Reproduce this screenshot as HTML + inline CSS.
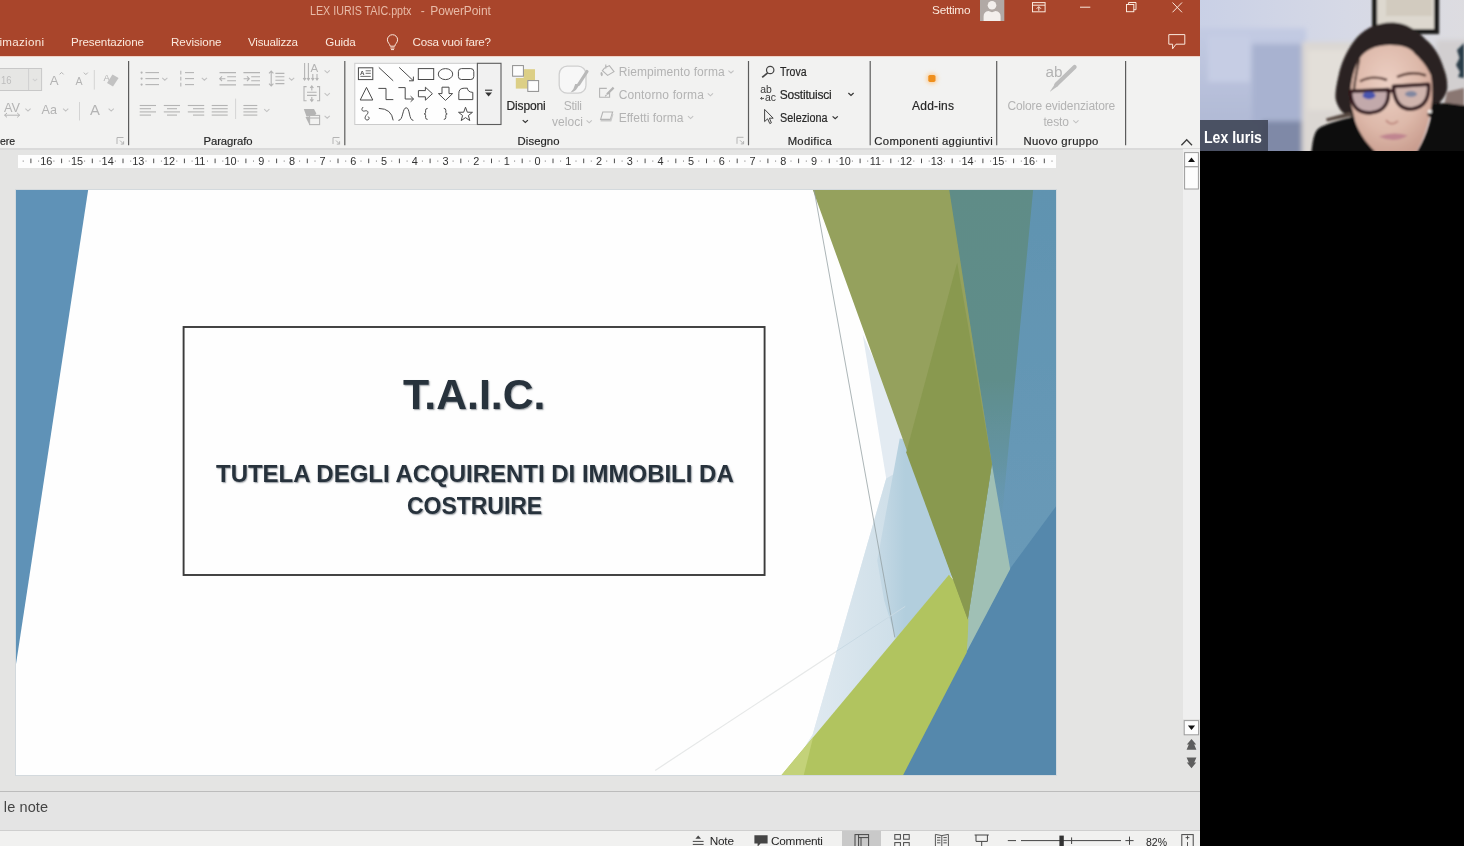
<!DOCTYPE html>
<html><head><meta charset="utf-8"><title>PowerPoint</title>
<style>
*{margin:0;padding:0;box-sizing:border-box}
html,body{width:1464px;height:846px;overflow:hidden;background:#000;font-family:"Liberation Sans",sans-serif}
#app{position:absolute;left:0;top:0;width:1200px;height:846px;background:#e4e4e3;overflow:hidden;opacity:.9999}
#title{position:absolute;left:0;top:0;width:1200px;height:57px;background:#a9452b}
#ribbon{position:absolute;left:0;top:56px;width:1200px;height:93.6px;background:#f2f2f1;border-top:1px solid #efd3c8;border-bottom:2px solid #dadada}
.t{position:absolute;white-space:pre;line-height:1;-webkit-font-smoothing:antialiased}
#ruler{position:absolute;left:18px;top:155px;width:1038px;height:13px;background:#fdfdfd}
#slide{position:absolute;left:15.8px;top:189.6px;width:1040.4px;height:585.4px;background:#fefefe;overflow:hidden;box-shadow:0 0 0 1px #d3d9dd}
#notes{position:absolute;left:0;top:791px;width:1200px;height:39px;background:#e4e4e4;border-top:1px solid #bcbcbc}
#status{position:absolute;left:0;top:830px;width:1200px;height:16px;background:#f1f1f0;border-top:1px solid #cfcfcf}
#vs{position:absolute;left:1183px;top:149px;width:17px;height:570px;background:#efefef}
#cam{position:absolute;left:1200px;top:0;width:264px;height:151px;overflow:hidden;background:#c9cfe0}
svg{position:absolute;left:0;top:0;overflow:hidden}
</style></head><body>
<div id="app">
<div id="title"></div>
<div id="ribbon"></div>
<div id="ruler"></div>
<div id="vs"></div>
<div id="slide">
<svg width="1040.4" height="585.4" viewBox="15.8 189.6 1040.4 585.4">
<defs>
<linearGradient id="pg" gradientUnits="userSpaceOnUse" x1="815" y1="0" x2="940" y2="0"><stop offset="0" stop-color="#dfe9f0"/><stop offset=".5" stop-color="#d2e1ea"/><stop offset="1" stop-color="#c4d9e5"/></linearGradient>
<linearGradient id="bg" gradientUnits="userSpaceOnUse" x1="0" y1="189" x2="0" y2="620">
<stop offset="0" stop-color="#6093b0"/><stop offset=".6" stop-color="#6698b6"/><stop offset="1" stop-color="#6a9ab8"/>
</linearGradient>
<filter id="sb" x="-5%" y="-5%" width="110%" height="110%"><feGaussianBlur stdDeviation="0.6"/></filter>
<linearGradient id="tg" gradientUnits="userSpaceOnUse" x1="0" y1="189" x2="0" y2="535"><stop offset="0" stop-color="#5e8c87"/><stop offset=".55" stop-color="#5f8d8a"/><stop offset=".8" stop-color="#64939f" stop-opacity=".8"/><stop offset="1" stop-color="#6899b4" stop-opacity="0"/></linearGradient>
<linearGradient id="pg2" gradientUnits="userSpaceOnUse" x1="872" y1="0" x2="905" y2="0"><stop offset="0" stop-color="#cadce7"/><stop offset="1" stop-color="#b2cedd"/></linearGradient>
</defs>
<g filter="url(#sb)">
<polygon points="13,187 88,187 88,189 15,669 13,669" fill="#5f92b7"/>
<!-- base blue -->
<polygon points="940,187 1058,187 1058,777 900,777 968,625" fill="url(#bg)"/>
<!-- lower-right darker blue -->
<polygon points="1058,503 1058,777 900,777 966,651 1010,568" fill="#5588ac"/>
<!-- teal -->
<polygon points="948,187 1033,187 1033,189 1000,535 991.7,463.7" fill="url(#tg)"/>
<!-- cream sliver -->
<polygon points="818,205 861,338 812.5,189" fill="#fbfbea"/>
<!-- pale -->
<polygon points="862.5,334 886,478 812.5,734 790,770 955,580 910,440" fill="#e3ebf2"/>
<polygon points="886,478 812.5,734 790,770 949,575 900,470" fill="url(#pg)"/>
<polygon points="899.5,438 877,560 884,600 895.6,638 949,575 958,580 912,440" fill="url(#pg2)"/>
<!-- sliver -->
<polygon points="991.7,463.7 1010,568.6 966,652 967.6,619" fill="#a0c0b5"/>
<!-- lime -->
<polygon points="779.5,777 781.2,774.8 948.8,574.3 958,585 968.2,619 967.6,636 966.5,652 902.7,775 901.5,777" fill="#b1c45f"/>
<polygon points="779.5,777 781.2,774.8 813,736.5 803,777" fill="#c3d279"/>
<!-- green -->
<polygon points="811.8,187 949,187 949,189 991.7,463.7 967.6,619 812.5,189" fill="#95a15d"/>
<polygon points="957,262 991.7,463.7 967.6,619 906,452" fill="#89994f"/>
</g>
<!-- thin lines -->
<line x1="813.8" y1="189" x2="894.6" y2="637" stroke="#8f9c9f" stroke-width=".75"/>
<line x1="655" y1="770" x2="836" y2="651" stroke="#e6e8e8" stroke-width="1.2"/>
<line x1="836" y1="651" x2="905" y2="606" stroke="#c9dae4" stroke-width="1"/>
<!-- text box -->
<rect x="183.4" y="326.6" width="581" height="248" fill="none" stroke="#3b3b3b" stroke-width="1.9"/>
</svg>

</div>
<div id="notes"></div>
<div id="status"></div>
<svg width="1200" height="846" viewBox="0 0 1200 846" font-family="Liberation Sans, sans-serif" fill="none" stroke-linecap="butt">
<defs><filter id="ib" x="-20%" y="-20%" width="140%" height="140%"><feGaussianBlur stdDeviation="0.35"/></filter><filter id="glow" x="-100%" y="-100%" width="300%" height="300%"><feGaussianBlur stdDeviation="2"/></filter></defs>
<g stroke="#fbe9dd" stroke-width="1">
<rect x="980" y="-1" width="24.3" height="22" fill="#b1a9a5" stroke="none"/>
<circle cx="992" cy="5.2" r="4.3" fill="#f3efec" stroke="none"/>
<path d="M983.6,21 V16.5 Q983.6,11.5 988.5,11 L992,12.2 L995.5,11 Q1000.6,11.5 1000.6,16.5 V21 Z" fill="#f3efec" stroke="none"/>
<rect x="1032.5" y="2.6" width="12.6" height="9.2"/><line x1="1032.5" y1="5.2" x2="1045" y2="5.2"/><path d="M1038.8,10.8 V6.8 M1036.6,8.8 L1038.8,6.6 L1041,8.8"/>
<line x1="1080" y1="7.2" x2="1090.3" y2="7.2"/>
<rect x="1126.5" y="4.5" width="7.3" height="7.2"/><path d="M1128.6,4.5 V2.5 H1136 V9.7 H1133.8"/>
<path d="M1172.5,2.5 L1182,12.3 M1182,2.5 L1172.5,12.3"/>
<path d="M1168.8,34.6 H1184.8 V44.2 H1176 L1172.6,48.8 V44.2 H1168.8 Z"/>
<path d="M390.2,46.2 C390.2,44 387.4,43 387.4,39.8 A5.1,5.1 0 0 1 397.6,39.8 C397.6,43 394.8,44 394.8,46.2 Z M390.4,48 H394.6 M391,49.6 H394"/>
</g>
<line x1="128.6" y1="61" x2="128.6" y2="145.3" stroke="#5c5c5c" stroke-width="1.2"/>
<line x1="344.8" y1="61" x2="344.8" y2="145.3" stroke="#5c5c5c" stroke-width="1.2"/>
<line x1="748.5" y1="61" x2="748.5" y2="145.3" stroke="#5c5c5c" stroke-width="1.2"/>
<line x1="870.2" y1="61" x2="870.2" y2="145.3" stroke="#5c5c5c" stroke-width="1.2"/>
<line x1="996.7" y1="61" x2="996.7" y2="145.3" stroke="#5c5c5c" stroke-width="1.2"/>
<line x1="1125.6" y1="61" x2="1125.6" y2="145.3" stroke="#5c5c5c" stroke-width="1.2"/>
<line x1="94.3" y1="70.0" x2="94.3" y2="89.6" stroke="#d4d4d4" stroke-width="1"/>
<line x1="79.5" y1="102.0" x2="79.5" y2="120.5" stroke="#d4d4d4" stroke-width="1"/>
<line x1="235.6" y1="98.6" x2="235.6" y2="119.0" stroke="#d4d4d4" stroke-width="1"/>
<path d="M117.0,144.0 V137.5 H123.5 M120.0,140.5 l3.6,3.6 m0,-2.8 v2.8 h-2.8" stroke="#b4b4b4" stroke-width="1"/>
<path d="M333.0,144.0 V137.5 H339.5 M336.0,140.5 l3.6,3.6 m0,-2.8 v2.8 h-2.8" stroke="#b4b4b4" stroke-width="1"/>
<path d="M737.0,143.8 V137.3 H743.5 M740.0,140.3 l3.6,3.6 m0,-2.8 v2.8 h-2.8" stroke="#b4b4b4" stroke-width="1"/>
<rect x="-1" y="68.5" width="42.6" height="22" fill="#e6e6e4" stroke="#c8c8c8"/><line x1="28.6" y1="69" x2="28.6" y2="90" stroke="#d0d0d0"/>
<path d="M32.8,78.8 l2.2,2.0 l2.2,-2.0" stroke="#d0d0d0" stroke-width="1.1"/>
<g fill="#b4b4b4" stroke="none">
<text x="49.8" y="84.6" font-size="13.2">A</text><text x="75.4" y="84.6" font-size="10.6">A</text>
<text x="103.6" y="80.5" font-size="9.5">A</text>
<path d="M112.5,74.5 L118.6,78 L113,86.5 L107,83 Z" fill="#c2c2c2"/>
<text x="4" y="112.3" font-size="12.6" textLength="16" lengthAdjust="spacingAndGlyphs">AV</text>
<text x="41.5" y="113.8" font-size="13.2" textLength="15.4" lengthAdjust="spacingAndGlyphs">Aa</text>
<text x="90" y="114.9" font-size="14.8">A</text>
</g>
<g stroke="#b4b4b4" stroke-width="1">
<path d="M59.6,74.4 l2,-2 l2,2 M83.8,72.6 l2,2 l2,-2"/>
<path d="M4.6,115.2 H19.6 M7,113 l-2.4,2.2 l2.4,2.2 M17.2,113 l2.4,2.2 l-2.4,2.2"/>
</g>
<path d="M25.4,108.7 l2.6,2.4 l2.6,-2.4" stroke="#c2c2c2" stroke-width="1.1"/>
<path d="M63.1,108.7 l2.6,2.4 l2.6,-2.4" stroke="#c2c2c2" stroke-width="1.1"/>
<path d="M108.6,108.7 l2.6,2.4 l2.6,-2.4" stroke="#c2c2c2" stroke-width="1.1"/>
<g stroke="#b4b4b4" stroke-width="1.1">
<line x1="145.4" y1="72.6" x2="159" y2="72.6"/><circle cx="141.6" cy="72.6" r="1.1" fill="#b4b4b4" stroke="none"/>
<line x1="145.4" y1="78.6" x2="159" y2="78.6"/><circle cx="141.6" cy="78.6" r="1.1" fill="#b4b4b4" stroke="none"/>
<line x1="145.4" y1="84.6" x2="159" y2="84.6"/><circle cx="141.6" cy="84.6" r="1.1" fill="#b4b4b4" stroke="none"/>
<line x1="185" y1="72.6" x2="194" y2="72.6"/><line x1="180.8" y1="70.8" x2="180.8" y2="74.4"/>
<line x1="185" y1="78.6" x2="194" y2="78.6"/><line x1="180.8" y1="76.8" x2="180.8" y2="80.4"/>
<line x1="185" y1="84.6" x2="194" y2="84.6"/><line x1="180.8" y1="82.8" x2="180.8" y2="86.4"/>
<path d="M219.5,72.6 H236 M227.2,76.7 H236 M227.2,80.8 H236 M219.5,84.9 H236 M225.4,78.7 H219.8 M222,76.4 l-2.3,2.3 l2.3,2.3"/>
<path d="M243.4,72.6 H260 M251.2,76.7 H260 M251.2,80.8 H260 M243.4,84.9 H260 M243.6,78.7 H249.2 M247,76.4 l2.3,2.3 l-2.3,2.3"/>
<path d="M271.2,71 V86 M269,73.4 l2.2,-2.4 l2.2,2.4 M269,83.6 l2.2,2.4 l2.2,-2.4 M275.4,73.4 H284.4 M275.4,76.8 H284.4 M275.4,80.2 H284.4 M275.4,83.6 H284.4"/>
<path d="M304.6,63 V80 M308.4,63 V80 M312.8,74 V80 M317,74 V80 M303.2,78 l1.4,2 l1.4,-2 M307,78 l1.4,2 l1.4,-2 M311.4,78 l1.4,2 l1.4,-2 M315.6,78 l1.4,2 l1.4,-2"/>
<text x="310.6" y="72.4" font-size="11.5" fill="#b4b4b4" stroke="none">A</text>
<path d="M306.6,86.6 H304 V100.8 H306.6 M317,86.6 H319.6 V100.8 H317 M307,92.2 H316.6 M307,95.4 H316.6 M311.8,86 V90.4 M311.8,97 V101.4 M310.2,88 l1.6,-2 l1.6,2 M310.2,99.4 l1.6,2 l1.6,-2"/>
<path d="M303.8,109 H314 L316.4,113.4 L314,116.5 H306.5 Z" fill="#b4b4b4" stroke="none"/><path d="M305.5,117 L309,124 V117Z" fill="#b4b4b4" stroke="none"/>
<rect x="309.6" y="115.4" width="10" height="9.2" fill="#f2f2f1"/><line x1="309.6" y1="118" x2="319.6" y2="118"/>
<line x1="139.7" y1="105.5" x2="156.0" y2="105.5"/>
<line x1="139.7" y1="108.7" x2="151.0" y2="108.7"/>
<line x1="139.7" y1="111.9" x2="156.0" y2="111.9"/>
<line x1="139.7" y1="115.1" x2="151.0" y2="115.1"/>
<line x1="163.8" y1="105.5" x2="180.0" y2="105.5"/>
<line x1="167.0" y1="108.7" x2="177.0" y2="108.7"/>
<line x1="163.8" y1="111.9" x2="180.0" y2="111.9"/>
<line x1="167.0" y1="115.1" x2="177.0" y2="115.1"/>
<line x1="187.8" y1="105.5" x2="204.2" y2="105.5"/>
<line x1="193.0" y1="108.7" x2="204.2" y2="108.7"/>
<line x1="187.8" y1="111.9" x2="204.2" y2="111.9"/>
<line x1="193.0" y1="115.1" x2="204.2" y2="115.1"/>
<line x1="211.7" y1="105.5" x2="227.7" y2="105.5"/>
<line x1="211.7" y1="108.7" x2="227.7" y2="108.7"/>
<line x1="211.7" y1="111.9" x2="227.7" y2="111.9"/>
<line x1="211.7" y1="115.1" x2="227.7" y2="115.1"/>
<line x1="243.4" y1="105.5" x2="257.3" y2="105.5"/>
<line x1="243.4" y1="108.7" x2="257.3" y2="108.7"/>
<line x1="243.4" y1="111.9" x2="257.3" y2="111.9"/>
<line x1="243.4" y1="115.1" x2="257.3" y2="115.1"/>
</g>
<path d="M162.2,77.8 l2.6,2.4 l2.6,-2.4" stroke="#c2c2c2" stroke-width="1.1"/>
<path d="M201.8,77.8 l2.6,2.4 l2.6,-2.4" stroke="#c2c2c2" stroke-width="1.1"/>
<path d="M289.0,77.8 l2.6,2.4 l2.6,-2.4" stroke="#c2c2c2" stroke-width="1.1"/>
<path d="M324.6,70.4 l2.6,2.4 l2.6,-2.4" stroke="#c2c2c2" stroke-width="1.1"/>
<path d="M324.6,93.2 l2.6,2.4 l2.6,-2.4" stroke="#c2c2c2" stroke-width="1.1"/>
<path d="M324.6,115.8 l2.6,2.4 l2.6,-2.4" stroke="#c2c2c2" stroke-width="1.1"/>
<path d="M264.2,109.2 l2.6,2.4 l2.6,-2.4" stroke="#c2c2c2" stroke-width="1.1"/>
<rect x="354.8" y="63.3" width="122.5" height="61.2" fill="#fefefe" stroke="#cbcbcb"/>
<rect x="477.4" y="63.3" width="23.6" height="61.2" fill="#f1f1f1" stroke="#5c5c5c" stroke-width="1.1"/>
<path d="M485,90.2 H492.2" stroke="#333" stroke-width="1.1"/><path d="M485.2,92.6 H492 L488.6,96.4 Z" fill="#333"/>
<g stroke="#4a4a4a" stroke-width="1" stroke-linejoin="miter" filter="url(#ib)">
<rect x="358.4" y="67.8" width="14.4" height="11.8"/><path d="M365.6,70.8 H370.8 M365.6,73.3 H370.8 M360.4,76.4 H370.8" stroke-width=".8"/><text x="359.9" y="74.6" font-size="6.2" fill="#4a4a4a" stroke="none" font-weight="bold">A</text>
<line x1="378.8" y1="67.4" x2="393.2" y2="80.8"/>
<path d="M399.2,67.4 L413.2,80.6 M413.4,76.6 V80.8 H409"/>
<rect x="418.3" y="68.6" width="15.4" height="10.9"/>
<ellipse cx="445.5" cy="74.1" rx="7.2" ry="5.5"/>
<rect x="458.4" y="68.6" width="15.4" height="10.9" rx="3" ry="3"/>
<path d="M366.5,87.4 L372.8,100 H360.2 Z"/>
<path d="M378.4,88.4 H386 V99.6 H393.3"/>
<path d="M398.4,87.6 H405.2 V99 H413.4 M410.6,96.2 L413.6,99 L410.6,101.8"/>
<path d="M418.4,90.6 H425.4 V87.2 L432.4,93.7 L425.4,100.2 V96.8 H418.4 Z"/>
<path d="M442,87.2 H449 V93.6 H452.6 L445.5,100.4 L438.4,93.6 H442 Z"/>
<path d="M458.8,99.6 V93.4 Q458.8,88.2 464.2,88.2 H467.4 Q467.6,92 472.8,92.4 V99.6 Z"/>
<path d="M363.2,107 C360.8,109.4 362,111.6 364.6,111 C368,110 369,112.4 366.8,114.6 C364.6,116.6 364.4,119.6 367,120 C369.6,120.2 369.8,117 367.8,116.6"/>
<path d="M378.8,108.4 Q391.6,108.6 393.2,120.4"/>
<path d="M398.4,120.4 C403.4,120.4 402.2,107.8 406.2,107.8 C410.2,107.8 408.6,120.4 413.4,120.4"/>
<path d="M427.6,108.4 Q425.6,108.4 425.6,110.2 V112.4 Q425.6,113.9 424.2,113.9 Q425.6,113.9 425.6,115.4 V117.6 Q425.6,119.4 427.6,119.4"/>
<path d="M443.8,108.4 Q445.8,108.4 445.8,110.2 V112.4 Q445.8,113.9 447.2,113.9 Q445.8,113.9 445.8,115.4 V117.6 Q445.8,119.4 443.8,119.4"/>
<polygon points="465.5,107.2 467.3,112.2 472.5,112.3 468.4,115.5 469.8,120.6 465.5,117.6 461.2,120.6 462.6,115.5 458.5,112.3 463.7,112.2"/>
</g>
<rect x="523.6" y="69.2" width="11.4" height="10.8" fill="#dccf86"/>
<rect x="515.8" y="78" width="11.8" height="10.6" fill="#dccf86"/>
<rect x="512.6" y="65.6" width="10.8" height="10.6" fill="#fdfdfd" stroke="#8e8e8e"/>
<rect x="527.8" y="80.6" width="10.8" height="10.8" fill="#fdfdfd" stroke="#8e8e8e"/>
<path d="M522.7,120.1 l2.6,2.4 l2.6,-2.4" stroke="#333" stroke-width="1.2"/>
<rect x="559.2" y="66.2" width="26.8" height="27" rx="8" fill="#f7f7f7" stroke="#cfcfcf" stroke-width="1.3"/>
<path d="M587,71.5 L578.6,84.5" stroke="#b9b9b9" stroke-width="3.2" stroke-linecap="round"/><path d="M579,84 Q577.5,91 570.5,92.6 Q574.2,89 575.2,84 Z" fill="#b9b9b9"/>
<path d="M586.6,120.4 l2.6,2.4 l2.6,-2.4" stroke="#c2c2c2" stroke-width="1.1"/>
<g stroke="#b4b4b4" stroke-width="1.1">
<path d="M604.6,68 L609.4,65.6 L614,71.6 L607.6,75.4 L602.4,70.6 Z M605.8,64.4 V68.4 M601.4,72.2 Q600.4,74.6 601.6,75.6 Q603,74.6 601.4,72.2"/>
<path d="M606.8,88.4 H599.6 V97.2 H609.6 V92.6"/><path d="M613.6,87.6 L607,94.2" stroke-width="2.2"/><path d="M606.6,94.6 L605.2,96.4"/>
<path d="M602.8,112 H612.6 L610.4,119.4 H600.6 Z"/><path d="M600.6,120.8 H610.8 L612.8,114" stroke-width="1.4" stroke="#c9c9c9"/>
</g>
<path d="M728.4,70.6 l2.6,2.4 l2.6,-2.4" stroke="#c2c2c2" stroke-width="1.1"/>
<path d="M707.8,93.4 l2.6,2.4 l2.6,-2.4" stroke="#c2c2c2" stroke-width="1.1"/>
<path d="M688.0,116.2 l2.6,2.4 l2.6,-2.4" stroke="#c2c2c2" stroke-width="1.1"/>
<g stroke="#454545" stroke-width="1.2">
<circle cx="770.2" cy="70" r="3.7"/><path d="M767.6,72.8 L762.2,77.4" stroke-width="1.7"/>
<path d="M764.6,109.4 V121.6 L767.6,118.8 L769.8,123.6 L771.4,122.8 L769.4,118.2 H773.2 Z" stroke-width="1" stroke-linejoin="round"/>
</g>
<g fill="#3a3a3a" stroke="none" font-size="10.4"><text x="760.2" y="93.2">ab</text><text x="764.9" y="101">ac</text></g>
<path d="M764,98.4 H760.8 M762,97 l-1.4,1.4 l1.4,1.4" stroke="#3a3a3a" stroke-width=".9"/>
<path d="M848.4,93.0 l2.6,2.4 l2.6,-2.4" stroke="#333" stroke-width="1.2"/>
<path d="M832.6,116.4 l2.6,2.4 l2.6,-2.4" stroke="#333" stroke-width="1.2"/>
<circle cx="931.9" cy="78.4" r="5.5" fill="#fbcf9a" filter="url(#glow)"/><rect x="928.3" y="74.9" width="7.2" height="7" rx="1.6" fill="#ef8f1f" filter="url(#ib)"/>
<text x="1045.4" y="76.8" font-size="15.4" fill="#b4b4b4" stroke="none" textLength="17" lengthAdjust="spacingAndGlyphs">ab</text>
<path d="M1074.6,67 L1056.4,84.6" stroke="#bdbdbd" stroke-width="4.2" stroke-linecap="round"/><path d="M1055.6,83 L1058.4,85.8 L1049.6,92 Z" fill="#bdbdbd"/>
<path d="M1073.3,120.4 l2.6,2.4 l2.6,-2.4" stroke="#c2c2c2" stroke-width="1.1"/>
<path d="M1181.4,145.2 L1186.7,139.8 L1192,145.2" stroke="#3c3c3c" stroke-width="1.3"/>
<g stroke="#4d4d4d" stroke-width="1">
<line x1="30.9" y1="158.6" x2="30.9" y2="163.2"/>
<line x1="61.6" y1="158.6" x2="61.6" y2="163.2"/>
<line x1="92.3" y1="158.6" x2="92.3" y2="163.2"/>
<line x1="123.0" y1="158.6" x2="123.0" y2="163.2"/>
<line x1="153.7" y1="158.6" x2="153.7" y2="163.2"/>
<line x1="184.4" y1="158.6" x2="184.4" y2="163.2"/>
<line x1="215.1" y1="158.6" x2="215.1" y2="163.2"/>
<line x1="245.9" y1="158.6" x2="245.9" y2="163.2"/>
<line x1="276.6" y1="158.6" x2="276.6" y2="163.2"/>
<line x1="307.3" y1="158.6" x2="307.3" y2="163.2"/>
<line x1="338.0" y1="158.6" x2="338.0" y2="163.2"/>
<line x1="368.7" y1="158.6" x2="368.7" y2="163.2"/>
<line x1="399.4" y1="158.6" x2="399.4" y2="163.2"/>
<line x1="430.1" y1="158.6" x2="430.1" y2="163.2"/>
<line x1="460.8" y1="158.6" x2="460.8" y2="163.2"/>
<line x1="491.5" y1="158.6" x2="491.5" y2="163.2"/>
<line x1="522.2" y1="158.6" x2="522.2" y2="163.2"/>
<line x1="553.0" y1="158.6" x2="553.0" y2="163.2"/>
<line x1="583.7" y1="158.6" x2="583.7" y2="163.2"/>
<line x1="614.4" y1="158.6" x2="614.4" y2="163.2"/>
<line x1="645.1" y1="158.6" x2="645.1" y2="163.2"/>
<line x1="675.8" y1="158.6" x2="675.8" y2="163.2"/>
<line x1="706.5" y1="158.6" x2="706.5" y2="163.2"/>
<line x1="737.2" y1="158.6" x2="737.2" y2="163.2"/>
<line x1="767.9" y1="158.6" x2="767.9" y2="163.2"/>
<line x1="798.6" y1="158.6" x2="798.6" y2="163.2"/>
<line x1="829.3" y1="158.6" x2="829.3" y2="163.2"/>
<line x1="860.1" y1="158.6" x2="860.1" y2="163.2"/>
<line x1="890.8" y1="158.6" x2="890.8" y2="163.2"/>
<line x1="921.5" y1="158.6" x2="921.5" y2="163.2"/>
<line x1="952.2" y1="158.6" x2="952.2" y2="163.2"/>
<line x1="982.9" y1="158.6" x2="982.9" y2="163.2"/>
<line x1="1013.6" y1="158.6" x2="1013.6" y2="163.2"/>
<line x1="1044.3" y1="158.6" x2="1044.3" y2="163.2"/>
</g><g fill="#8a8a8a">
<rect x="22.7" y="160.5" width="1" height="1.2"/>
<rect x="38.1" y="160.5" width="1" height="1.2"/>
<rect x="53.4" y="160.5" width="1" height="1.2"/>
<rect x="68.8" y="160.5" width="1" height="1.2"/>
<rect x="84.1" y="160.5" width="1" height="1.2"/>
<rect x="99.5" y="160.5" width="1" height="1.2"/>
<rect x="114.8" y="160.5" width="1" height="1.2"/>
<rect x="130.2" y="160.5" width="1" height="1.2"/>
<rect x="145.5" y="160.5" width="1" height="1.2"/>
<rect x="160.9" y="160.5" width="1" height="1.2"/>
<rect x="176.3" y="160.5" width="1" height="1.2"/>
<rect x="191.6" y="160.5" width="1" height="1.2"/>
<rect x="207.0" y="160.5" width="1" height="1.2"/>
<rect x="222.3" y="160.5" width="1" height="1.2"/>
<rect x="237.7" y="160.5" width="1" height="1.2"/>
<rect x="253.0" y="160.5" width="1" height="1.2"/>
<rect x="268.4" y="160.5" width="1" height="1.2"/>
<rect x="283.7" y="160.5" width="1" height="1.2"/>
<rect x="299.1" y="160.5" width="1" height="1.2"/>
<rect x="314.5" y="160.5" width="1" height="1.2"/>
<rect x="329.8" y="160.5" width="1" height="1.2"/>
<rect x="345.2" y="160.5" width="1" height="1.2"/>
<rect x="360.5" y="160.5" width="1" height="1.2"/>
<rect x="375.9" y="160.5" width="1" height="1.2"/>
<rect x="391.2" y="160.5" width="1" height="1.2"/>
<rect x="406.6" y="160.5" width="1" height="1.2"/>
<rect x="421.9" y="160.5" width="1" height="1.2"/>
<rect x="437.3" y="160.5" width="1" height="1.2"/>
<rect x="452.6" y="160.5" width="1" height="1.2"/>
<rect x="468.0" y="160.5" width="1" height="1.2"/>
<rect x="483.4" y="160.5" width="1" height="1.2"/>
<rect x="498.7" y="160.5" width="1" height="1.2"/>
<rect x="514.1" y="160.5" width="1" height="1.2"/>
<rect x="529.4" y="160.5" width="1" height="1.2"/>
<rect x="544.8" y="160.5" width="1" height="1.2"/>
<rect x="560.1" y="160.5" width="1" height="1.2"/>
<rect x="575.5" y="160.5" width="1" height="1.2"/>
<rect x="590.8" y="160.5" width="1" height="1.2"/>
<rect x="606.2" y="160.5" width="1" height="1.2"/>
<rect x="621.6" y="160.5" width="1" height="1.2"/>
<rect x="636.9" y="160.5" width="1" height="1.2"/>
<rect x="652.3" y="160.5" width="1" height="1.2"/>
<rect x="667.6" y="160.5" width="1" height="1.2"/>
<rect x="683.0" y="160.5" width="1" height="1.2"/>
<rect x="698.3" y="160.5" width="1" height="1.2"/>
<rect x="713.7" y="160.5" width="1" height="1.2"/>
<rect x="729.0" y="160.5" width="1" height="1.2"/>
<rect x="744.4" y="160.5" width="1" height="1.2"/>
<rect x="759.7" y="160.5" width="1" height="1.2"/>
<rect x="775.1" y="160.5" width="1" height="1.2"/>
<rect x="790.5" y="160.5" width="1" height="1.2"/>
<rect x="805.8" y="160.5" width="1" height="1.2"/>
<rect x="821.2" y="160.5" width="1" height="1.2"/>
<rect x="836.5" y="160.5" width="1" height="1.2"/>
<rect x="851.9" y="160.5" width="1" height="1.2"/>
<rect x="867.2" y="160.5" width="1" height="1.2"/>
<rect x="882.6" y="160.5" width="1" height="1.2"/>
<rect x="897.9" y="160.5" width="1" height="1.2"/>
<rect x="913.3" y="160.5" width="1" height="1.2"/>
<rect x="928.7" y="160.5" width="1" height="1.2"/>
<rect x="944.0" y="160.5" width="1" height="1.2"/>
<rect x="959.4" y="160.5" width="1" height="1.2"/>
<rect x="974.7" y="160.5" width="1" height="1.2"/>
<rect x="990.1" y="160.5" width="1" height="1.2"/>
<rect x="1005.4" y="160.5" width="1" height="1.2"/>
<rect x="1020.8" y="160.5" width="1" height="1.2"/>
<rect x="1036.1" y="160.5" width="1" height="1.2"/>
<rect x="1051.5" y="160.5" width="1" height="1.2"/>
</g>
<g stroke="#9c9c9c" stroke-width="1" fill="#fdfdfd">
<rect x="1184.6" y="152.6" width="13.8" height="14.2"/><rect x="1184.6" y="166.8" width="13.8" height="22.2"/><rect x="1184.2" y="720.6" width="14.4" height="14.2"/>
</g>
<path d="M1188,162 H1195 L1191.5,157.6 Z M1187.9,725.6 H1195.1 L1191.5,730 Z" fill="#111"/>
<path d="M1191.5,739 L1196.2,744.6 H1194.2 L1196.4,749.8 H1186.6 L1188.8,744.6 H1186.8 Z M1191.5,768.2 L1196.2,762.6 H1194.2 L1196.4,757.4 H1186.6 L1188.8,762.6 H1186.8 Z" fill="#5e5e5e"/>
<rect x="842" y="831" width="39" height="15" fill="#c9c9c9"/>
<g stroke="#454545" stroke-width="1">
<path d="M692.8,841.4 H703.6 M692.8,844.4 H703.6"/><path d="M695.4,838.8 L698.2,835.4 L701,838.8 Z" fill="#454545" stroke="none"/>
<rect x="855" y="834.6" width="13.6" height="13"/><path d="M858.6,834.6 V848 M858.6,837.6 H868.6 M861,837.6 V848"/>
<rect x="894.8" y="834.6" width="5.6" height="4.6"/><rect x="903.6" y="834.6" width="5.6" height="4.6"/><rect x="894.8" y="842.6" width="5.6" height="4.6"/><rect x="903.6" y="842.6" width="5.6" height="4.6"/>
<path d="M941.8,835.6 V848 M941.8,835.6 L935.4,834.4 V846 M941.8,835.6 L948.4,834.4 V846 M937,837.6 H940.4 M937,840.2 H940.4 M937,842.8 H940.4 M943.4,837.6 H946.8 M943.4,840.2 H946.8 M943.4,842.8 H946.8" stroke-width=".9"/>
<path d="M974.6,835 H988.8 M976,835 V841.4 H987.4 V835 M981.7,841.4 V846"/>
<path d="M1007.8,840.6 H1016 M1021,840.6 H1121 M1125.4,840.6 H1133.6 M1129.5,836.6 V844.8 M1071.6,837.4 V844"/>
<rect x="1059.4" y="835.6" width="4.4" height="11" fill="#333" stroke="none"/>
<rect x="1181.8" y="834.6" width="11.4" height="12"/><path d="M1187.5,835.6 V839.6 M1185.6,837.6 H1189.4 M1187.5,842 V846" stroke-width=".9"/>
</g>
<path d="M754.4,835.2 H767.6 V843.4 H760.6 L757.6,846.6 V843.4 H754.4 Z" fill="#454545"/>
</svg>
<span class="t" style="left:310.40px;top:4.74px;font-size:12.00px;color:#e8bba8;transform-origin:0 50%;transform:scaleX(0.8926);">LEX IURIS TAIC.pptx</span>
<span class="t" style="left:420.80px;top:4.74px;font-size:12.00px;color:#e8bba8;">-</span>
<span class="t" style="left:430.30px;top:4.74px;font-size:12.00px;color:#e8bba8;letter-spacing:-0.096px;">PowerPoint</span>
<span class="t" style="left:932.10px;top:4.51px;font-size:11.80px;color:#fbe9dd;letter-spacing:-0.267px;">Settimo</span>
<span class="t" style="left:-0.50px;top:35.78px;font-size:11.60px;color:#fbe9dd;letter-spacing:0.279px;">imazioni</span>
<span class="t" style="left:71.00px;top:35.78px;font-size:11.60px;color:#fbe9dd;letter-spacing:-0.097px;">Presentazione</span>
<span class="t" style="left:171.00px;top:35.78px;font-size:11.60px;color:#fbe9dd;letter-spacing:-0.055px;">Revisione</span>
<span class="t" style="left:248.00px;top:35.78px;font-size:11.60px;color:#fbe9dd;letter-spacing:-0.224px;">Visualizza</span>
<span class="t" style="left:325.30px;top:35.78px;font-size:11.60px;color:#fbe9dd;letter-spacing:-0.139px;">Guida</span>
<span class="t" style="left:412.50px;top:35.78px;font-size:11.60px;color:#fbe9dd;letter-spacing:-0.189px;">Cosa vuoi fare?</span>
<span class="t" style="left:0.00px;top:135.83px;font-size:11.30px;color:#262626;transform-origin:0 50%;transform:scaleX(0.9307);-webkit-text-stroke:.18px #262626;">ere</span>
<span class="t" style="left:203.50px;top:135.83px;font-size:11.30px;color:#262626;letter-spacing:-0.078px;-webkit-text-stroke:.18px #262626;">Paragrafo</span>
<span class="t" style="left:517.60px;top:135.83px;font-size:11.30px;color:#262626;letter-spacing:0.073px;-webkit-text-stroke:.18px #262626;">Disegno</span>
<span class="t" style="left:787.70px;top:135.83px;font-size:11.30px;color:#262626;letter-spacing:0.275px;-webkit-text-stroke:.18px #262626;">Modifica</span>
<span class="t" style="left:874.30px;top:135.83px;font-size:11.30px;color:#262626;letter-spacing:0.329px;-webkit-text-stroke:.18px #262626;">Componenti aggiuntivi</span>
<span class="t" style="left:1023.40px;top:135.83px;font-size:11.30px;color:#262626;letter-spacing:0.365px;-webkit-text-stroke:.18px #262626;">Nuovo gruppo</span>
<span class="t" style="left:0.50px;top:74.69px;font-size:11.00px;color:#bdbdbd;transform-origin:0 50%;transform:scaleX(0.8582);">16</span>
<span class="t" style="left:506.60px;top:100.34px;font-size:12.00px;color:#262626;letter-spacing:-0.153px;-webkit-text-stroke:.18px #262626;">Disponi</span>
<span class="t" style="left:563.80px;top:100.34px;font-size:12.00px;color:#b3b3b3;letter-spacing:-0.284px;">Stili</span>
<span class="t" style="left:551.90px;top:116.04px;font-size:12.00px;color:#b3b3b3;letter-spacing:0.084px;">veloci</span>
<span class="t" style="left:618.70px;top:65.74px;font-size:12.00px;color:#b3b3b3;letter-spacing:0.081px;">Riempimento forma</span>
<span class="t" style="left:618.70px;top:88.54px;font-size:12.00px;color:#b3b3b3;letter-spacing:0.140px;">Contorno forma</span>
<span class="t" style="left:618.70px;top:111.54px;font-size:12.00px;color:#b3b3b3;letter-spacing:0.027px;">Effetti forma</span>
<span class="t" style="left:779.80px;top:65.74px;font-size:12.00px;color:#262626;transform-origin:0 50%;transform:scaleX(0.8766);-webkit-text-stroke:.18px #262626;">Trova</span>
<span class="t" style="left:779.80px;top:88.54px;font-size:12.00px;color:#262626;letter-spacing:-0.212px;-webkit-text-stroke:.18px #262626;">Sostituisci</span>
<span class="t" style="left:779.80px;top:111.54px;font-size:12.00px;color:#262626;transform-origin:0 50%;transform:scaleX(0.9012);-webkit-text-stroke:.18px #262626;">Seleziona</span>
<span class="t" style="left:912.10px;top:100.34px;font-size:12.00px;color:#262626;letter-spacing:0.202px;-webkit-text-stroke:.18px #262626;">Add-ins</span>
<span class="t" style="left:1007.40px;top:100.34px;font-size:12.00px;color:#b3b3b3;letter-spacing:-0.114px;">Colore evidenziatore</span>
<span class="t" style="left:1043.40px;top:116.14px;font-size:12.00px;color:#b3b3b3;letter-spacing:-0.129px;">testo</span>
<span class="t" style="left:40.18px;top:155.77px;font-size:10.90px;color:#333;">16</span>
<span class="t" style="left:70.89px;top:155.77px;font-size:10.90px;color:#333;">15</span>
<span class="t" style="left:101.60px;top:155.77px;font-size:10.90px;color:#333;">14</span>
<span class="t" style="left:132.31px;top:155.77px;font-size:10.90px;color:#333;">13</span>
<span class="t" style="left:163.02px;top:155.77px;font-size:10.90px;color:#333;">12</span>
<span class="t" style="left:194.13px;top:155.77px;font-size:10.90px;color:#333;">11</span>
<span class="t" style="left:224.44px;top:155.77px;font-size:10.90px;color:#333;">10</span>
<span class="t" style="left:258.18px;top:155.77px;font-size:10.90px;color:#333;">9</span>
<span class="t" style="left:288.89px;top:155.77px;font-size:10.90px;color:#333;">8</span>
<span class="t" style="left:319.60px;top:155.77px;font-size:10.90px;color:#333;">7</span>
<span class="t" style="left:350.31px;top:155.77px;font-size:10.90px;color:#333;">6</span>
<span class="t" style="left:381.02px;top:155.77px;font-size:10.90px;color:#333;">5</span>
<span class="t" style="left:411.73px;top:155.77px;font-size:10.90px;color:#333;">4</span>
<span class="t" style="left:442.44px;top:155.77px;font-size:10.90px;color:#333;">3</span>
<span class="t" style="left:473.15px;top:155.77px;font-size:10.90px;color:#333;">2</span>
<span class="t" style="left:503.86px;top:155.77px;font-size:10.90px;color:#333;">1</span>
<span class="t" style="left:534.57px;top:155.77px;font-size:10.90px;color:#333;">0</span>
<span class="t" style="left:565.28px;top:155.77px;font-size:10.90px;color:#333;">1</span>
<span class="t" style="left:595.99px;top:155.77px;font-size:10.90px;color:#333;">2</span>
<span class="t" style="left:626.70px;top:155.77px;font-size:10.90px;color:#333;">3</span>
<span class="t" style="left:657.41px;top:155.77px;font-size:10.90px;color:#333;">4</span>
<span class="t" style="left:688.12px;top:155.77px;font-size:10.90px;color:#333;">5</span>
<span class="t" style="left:718.83px;top:155.77px;font-size:10.90px;color:#333;">6</span>
<span class="t" style="left:749.54px;top:155.77px;font-size:10.90px;color:#333;">7</span>
<span class="t" style="left:780.25px;top:155.77px;font-size:10.90px;color:#333;">8</span>
<span class="t" style="left:810.96px;top:155.77px;font-size:10.90px;color:#333;">9</span>
<span class="t" style="left:838.64px;top:155.77px;font-size:10.90px;color:#333;">10</span>
<span class="t" style="left:869.75px;top:155.77px;font-size:10.90px;color:#333;">11</span>
<span class="t" style="left:900.06px;top:155.77px;font-size:10.90px;color:#333;">12</span>
<span class="t" style="left:930.77px;top:155.77px;font-size:10.90px;color:#333;">13</span>
<span class="t" style="left:961.48px;top:155.77px;font-size:10.90px;color:#333;">14</span>
<span class="t" style="left:992.19px;top:155.77px;font-size:10.90px;color:#333;">15</span>
<span class="t" style="left:1022.90px;top:155.77px;font-size:10.90px;color:#333;">16</span>
<span class="t" style="left:3.80px;top:800.33px;font-size:14.50px;color:#444;letter-spacing:0.127px;">le note</span>
<span class="t" style="left:709.70px;top:836.31px;font-size:11.80px;color:#262626;letter-spacing:-0.208px;">Note</span>
<span class="t" style="left:771.00px;top:836.31px;font-size:11.80px;color:#262626;letter-spacing:-0.253px;">Commenti</span>
<span class="t" style="left:1146.00px;top:836.73px;font-size:11.30px;color:#262626;transform-origin:0 50%;transform:scaleX(0.9285);">82%</span>
<span class="t" style="left:402.60px;top:373.75px;font-size:42.00px;color:#27323c;transform-origin:0 50%;transform:scaleX(1.0171);font-weight:bold;text-shadow:1px 1px 1.5px rgba(60,70,80,.55);">T.A.I.C.</span>
<span class="t" style="left:215.60px;top:462.31px;font-size:24.80px;color:#27323c;transform-origin:0 50%;transform:scaleX(0.9670);font-weight:bold;text-shadow:1px 1px 1.5px rgba(60,70,80,.55);">TUTELA DEGLI ACQUIRENTI DI IMMOBILI DA</span>
<span class="t" style="left:406.60px;top:493.51px;font-size:24.80px;color:#27323c;transform-origin:0 50%;transform:scaleX(0.9257);font-weight:bold;text-shadow:1px 1px 1.5px rgba(60,70,80,.55);">COSTRUIRE</span>
</div>
<div id="cam">
<svg width="264" height="152" viewBox="0 0 264 152">
<defs>
<filter id="cb" x="-10%" y="-10%" width="120%" height="120%"><feGaussianBlur stdDeviation="1.3"/></filter>
<filter id="cb2" x="-10%" y="-10%" width="120%" height="120%"><feGaussianBlur stdDeviation="2.6"/></filter>
<linearGradient id="wl" x1="0" y1="0" x2="1" y2="0"><stop offset="0" stop-color="#c9d0e6"/><stop offset=".55" stop-color="#d6d9e6"/><stop offset="1" stop-color="#dddce0"/></linearGradient>
<linearGradient id="lf" x1="0" y1="0" x2="0" y2="1"><stop offset="0" stop-color="#c3cbe3"/><stop offset="1" stop-color="#aab3d0"/></linearGradient>
<radialGradient id="fc" cx=".45" cy=".35" r=".7"><stop offset="0" stop-color="#ecd0c4"/><stop offset=".6" stop-color="#ddb8a9"/><stop offset="1" stop-color="#c79a8c"/></radialGradient>
</defs>
<rect x="-5" y="-5" width="274" height="162" fill="url(#wl)"/>
<g filter="url(#cb2)">
<rect x="-6" y="28" width="112" height="130" fill="url(#lf)"/>
<rect x="52" y="44" width="52" height="80" fill="#a8b2d0"/>
<rect x="8" y="36" width="42" height="46" fill="#c6cde4"/>
<rect x="62" y="121" width="40" height="40" fill="#7f89a7"/>
<rect x="102" y="42" width="60" height="116" fill="#dbd7d3"/>
<rect x="108" y="50" width="40" height="60" fill="#e3dfd9"/>
<rect x="236" y="40" width="34" height="70" fill="#d2cfd0"/>
</g>
<g filter="url(#cb)">
<!-- picture frame -->
<rect x="174.6" y="-6" width="62" height="37.6" fill="#ddd8cf" stroke="#1f1c1a" stroke-width="5"/>
<rect x="186" y="-2" width="46" height="18" fill="#d2cbbf"/>
<!-- plant / chair -->
<path d="M264,43 L257,50 L259.5,58 L256,65 L260,72 L258,77 L264,78 Z" fill="#2b3c4a"/>
<path d="M247,92 L264,88 V108 L244,106 Z" fill="#8a7772"/>
<!-- hair -->
<path d="M193.4,22.5 C176,22 162,30 153.9,41.3 C146,52 141,64 138.6,75.4 C136,86 134.6,96 136,100.6 C138,108 142,113 146.7,115 L156,119 L238,117 L240,102 C244,98 247.6,92 247.3,86.2 C247.4,80 246,74 243.7,68.3 C240,56 234,46 225.7,39.5 C217,30 206,23 193.4,22.5 Z" fill="#2a2220"/>
<path d="M150,112 L126,118.5 L127,121.5 L153,116 Z" fill="#54463f"/>
<!-- face -->
<path d="M159.3,59.3 C164,50 176,45 190,45 C203,45 211,48 215,53.9 C222,60 228,68 231,75.4 C233,88 232.5,100 231,108 C229,124 224,140 214,156 L176,156 C163,142 156,128 153,112 C150.6,104 150,98 150.3,93.4 C151,80 154,68 159.3,59.3 Z" fill="url(#fc)"/>
<path d="M159.3,59.3 C157,70 154,82 153.6,96" stroke="#4a3833" stroke-width="2.2" fill="none"/>
<!-- clothes -->
<path d="M111,156 C112.6,140 114,133 118,129 C124,124 140,120 153.9,116.8 C157,130 165,142 175.4,152 L176,156 Z" fill="#0b0b0c"/>
<path d="M214,156 C224,142 231,124 233,104 L246,103 L268,106 V156 Z" fill="#0b0b0c"/>
<!-- lenses -->
<path d="M150.4,91.2 L188.4,89.6 C189.4,100 186,111.6 171,112.8 C156,113.6 151,104 150.4,91.2 Z" fill="#c2a9ab" stroke="#33191c" stroke-width="3.6" stroke-linejoin="round"/>
<path d="M193.4,86.4 L228.6,84.2 C229.4,95 226.6,107 212,109 C199,110.2 193.8,99 193.4,86.4 Z" fill="#cfb4ad" stroke="#33191c" stroke-width="3.6" stroke-linejoin="round"/>
<path d="M187,91.6 L194,90.4" stroke="#33191c" stroke-width="3.4"/>
<ellipse cx="169" cy="95.4" rx="6.4" ry="3.8" fill="#4a54ae"/>
<ellipse cx="211" cy="94" rx="6" ry="3" fill="#8187a0"/>
<!-- brows -->
<path d="M160,81.5 Q172,74.5 187,80" stroke="#5f4038" stroke-width="2.4" fill="none"/>
<path d="M197,77 Q211,70.5 226,75.5" stroke="#5f4038" stroke-width="2.4" fill="none"/>
<!-- nose & lips -->
<path d="M186,120 Q191,127 198,121" stroke="#c08c82" stroke-width="2" fill="none"/>
<path d="M179,136.5 Q193,131 207.8,135.5 Q194,144 179,136.5 Z" fill="#c08590"/>
<circle cx="229.8" cy="111.4" r="2" fill="#f4f1ee"/>
<circle cx="229" cy="114.6" r="1.6" fill="#111"/>
</g>
<rect x="0" y="120" width="68" height="32" fill="#454b5d" opacity=".95"/>
</svg>

</div>
<span class="t" style="left:1203.80px;top:128.59px;font-size:16.20px;color:#fff;transform-origin:0 50%;transform:scaleX(0.8705);font-weight:bold;">Lex Iuris</span>
</body></html>
